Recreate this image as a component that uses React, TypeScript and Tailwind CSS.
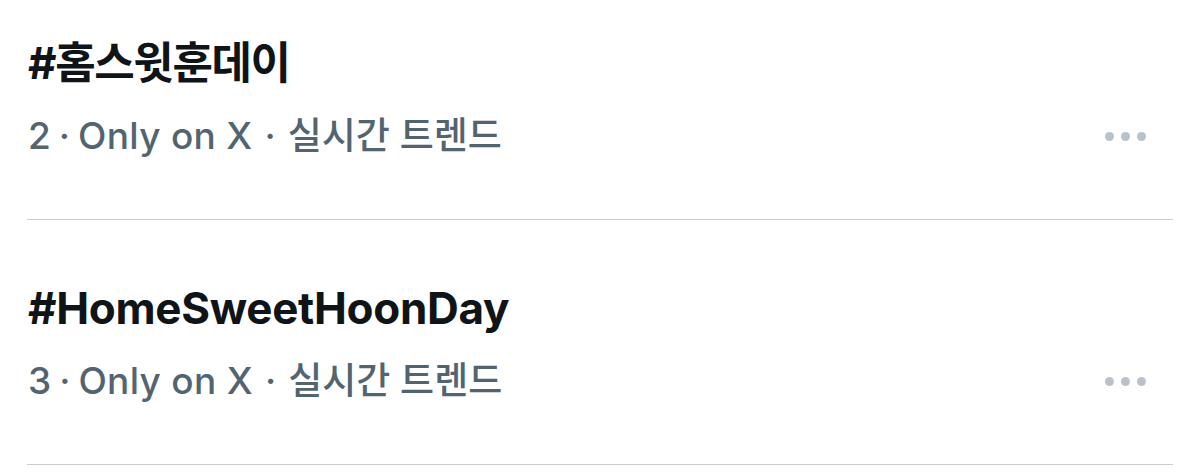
import React from "react";

const trends = [
  { rank: 2, tag: "#홈스윗훈데이", first: true },
  { rank: 3, tag: "#HomeSweetHoonDay", first: false },
];

function Dots() {
  return (
    <div className="flex items-center gap-[7px] mr-[27px]">
      <span className="w-[9px] h-[9px] rounded-full bg-[#b9c2cb]" />
      <span className="w-[9px] h-[9px] rounded-full bg-[#b9c2cb]" />
      <span className="w-[9px] h-[9px] rounded-full bg-[#b9c2cb]" />
    </div>
  );
}

export default function App() {
  return (
    <main
      className="w-[1200px] h-[476px] bg-white overflow-hidden px-[27px]"
      style={{ fontFamily: 'Inter, "Noto Sans CJK KR", sans-serif' }}
    >
      {trends.map((t) => (
        <div
          key={t.rank}
          className={`border-b border-[#c9cdd1] pb-[61px] ${t.first ? "pt-[37px]" : "pt-[62px]"}`}
        >
          <h2
            className={`text-[44px] font-bold leading-[52px] text-[#0f1419] pl-[1px] ${
              t.first ? "tracking-[-1.4px]" : "tracking-[-0.3px]"
            }`}
          >
            {t.tag}
          </h2>
          <div className="flex items-center justify-between mt-[25px] h-[44px]">
            <p className="text-[37px] font-medium leading-[44px] text-[#536471] pl-[1px]">
              {t.rank}
              <span className="mx-[8px]">·</span>
              <span className="tracking-[0.3px]">Only on X</span>
              <span className="mx-[12px]">·</span>실시간 트렌드
            </p>
            <Dots />
          </div>
        </div>
      ))}
    </main>
  );
}
